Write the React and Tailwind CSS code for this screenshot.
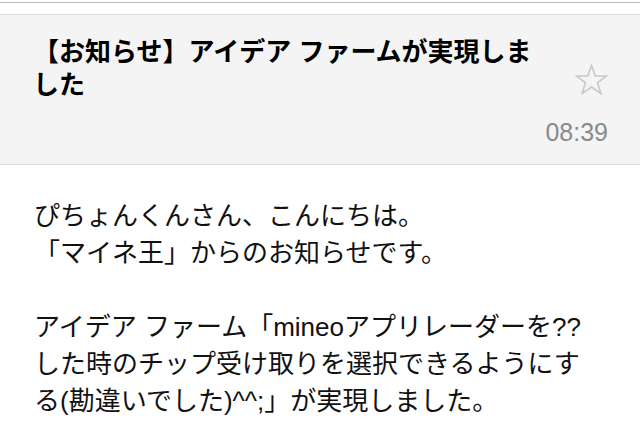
export default function App() {
    return <div className="w-[640px] h-[447px] overflow-hidden bg-white font-['Liberation_Sans','Noto_Sans_CJK_JP',sans-serif]">
        <TopBar />
        <Header />
        <Body />
    </div>
}

function TopBar() {
    return <div className="h-[14px] bg-white">
        <div className="h-[2px]"></div>
        <div className="h-px bg-[#b8b8b8]"></div>
    </div>
}

function Header() {
    return <div className="bg-[#f4f4f4] border-y border-[#dcdcdc] h-[151px] pl-[33px] pr-[32px] pt-[21px]">
        <div className="flex items-start justify-between">
            <h1 className="text-[26px] leading-[33px] font-bold text-black">
                【お知らせ】アイデア ファームが実現しま<br />した
            </h1>
            <StarIcon />
        </div>
        <div className="text-right text-[25px] leading-[30px] text-[#8a8a8a] mt-[15px]">
            08:39
        </div>
    </div>
}

function StarIcon() {
    return <svg className="mt-[28px] shrink-0" width="33" height="31" viewBox="0 0 33 31" fill="none">
        <path
            d="M16.5 1.5 L20.3 12 L31.5 12 L22.5 18.8 L25.9 29.5 L16.5 23 L7.1 29.5 L10.5 18.8 L1.5 12 L12.7 12 Z"
            stroke="#c8c8c8"
            strokeWidth="1.6"
            strokeLinejoin="miter"
        />
    </svg>
}

function Body() {
    return <div className="pl-[34px] pt-[33px] text-[26px] leading-[37px] text-[#111]">
        <p>ぴちょんくんさん、こんにちは。<br />「マイネ王」からのお知らせです。</p>
        <p className="mt-[37px]">
            アイデア ファーム「mineoアプリレーダーを??<br />
            した時のチップ受け取りを選択できるようにす<br />
            る(勘違いでした)^^;」が実現しました。
        </p>
    </div>
}
